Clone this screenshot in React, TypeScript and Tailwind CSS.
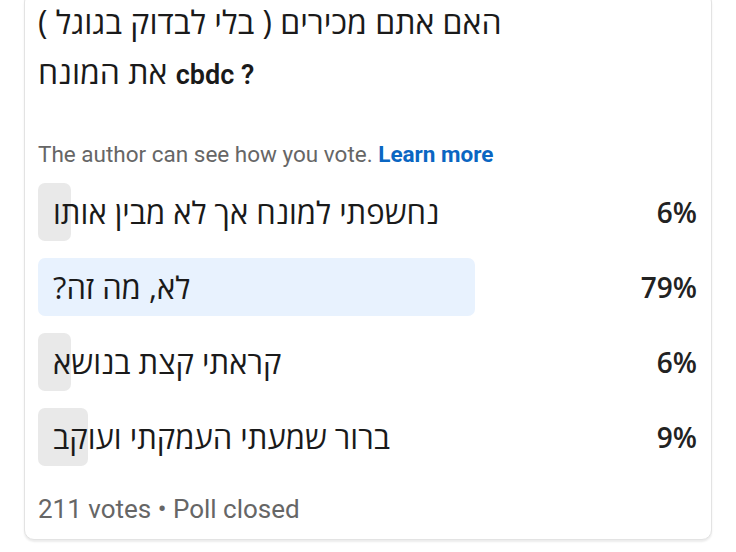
import React from "react";

const options = [
  { label: "נחשפתי למונח אך לא מבין אותו", pct: 6, top: false },
  { label: "לא, מה זה?", pct: 79, top: true },
  { label: "קראתי קצת בנושא", pct: 6, top: false },
  { label: "ברור שמעתי העמקתי ועוקב", pct: 9, top: false },
];

export default function App() {
  return (
    <div className="w-[736px] h-[552px] bg-white overflow-hidden">
      <div className="ml-[24px] w-[688px] -mt-[8px] rounded-[10px] border border-[#e3e3e3] bg-white shadow-[0_2px_2px_rgba(0,0,0,0.08)] pl-[13px] pr-[14px] pt-[4px] pb-[14px]">
        <div className="text-[32px] leading-[50px] text-[#1a1a1a] font-['Open_Sans','Noto_Sans','DejaVu_Sans',sans-serif]">
          <div>{"האם אתם מכירים ( בלי לבדוק בגוגל )\u200F"}</div>
          <div>
            {"את המונח "}
            <span className="text-[27px] font-semibold font-['Roboto','Open_Sans',sans-serif]">cbdc ?</span>
          </div>
        </div>

        <div className="mt-[39px] text-[22.5px] leading-[30px] text-[#666666] font-['Roboto','Noto_Sans',sans-serif]">
          The author can see how you vote.{" "}
          <span className="font-bold text-[#0a66c2]">Learn more</span>
        </div>

        <div className="mt-[14px] flex flex-col gap-[17px]">
          {options.map((o) => (
            <div key={o.label} className="flex items-center">
              <div className="relative flex-1 h-[58px]">
                <div
                  className={o.top ? "absolute left-0 top-0 h-full rounded-[7px] bg-[#e8f2fe]" : "absolute left-0 top-0 h-full rounded-[7px] bg-[#e9e9e9]"}
                  style={{ width: `${o.pct}%` }}
                />
                <div className="relative h-full flex items-center pl-[15px] text-[31px] text-[#1a1a1a] whitespace-nowrap font-['Open_Sans','Noto_Sans','DejaVu_Sans',sans-serif]">
                  {o.label + "\u200F"}
                </div>
              </div>
              <div className="w-[106px] text-right text-[28px] font-semibold text-[#222222] font-['Open_Sans','Noto_Sans',sans-serif]">
                {o.pct}%
              </div>
            </div>
          ))}
        </div>

        <div className="mt-[27px] text-[26px] leading-[32px] text-[#666666] font-['Roboto','Noto_Sans',sans-serif]">
          211 votes • Poll closed
        </div>
      </div>
    </div>
  );
}
